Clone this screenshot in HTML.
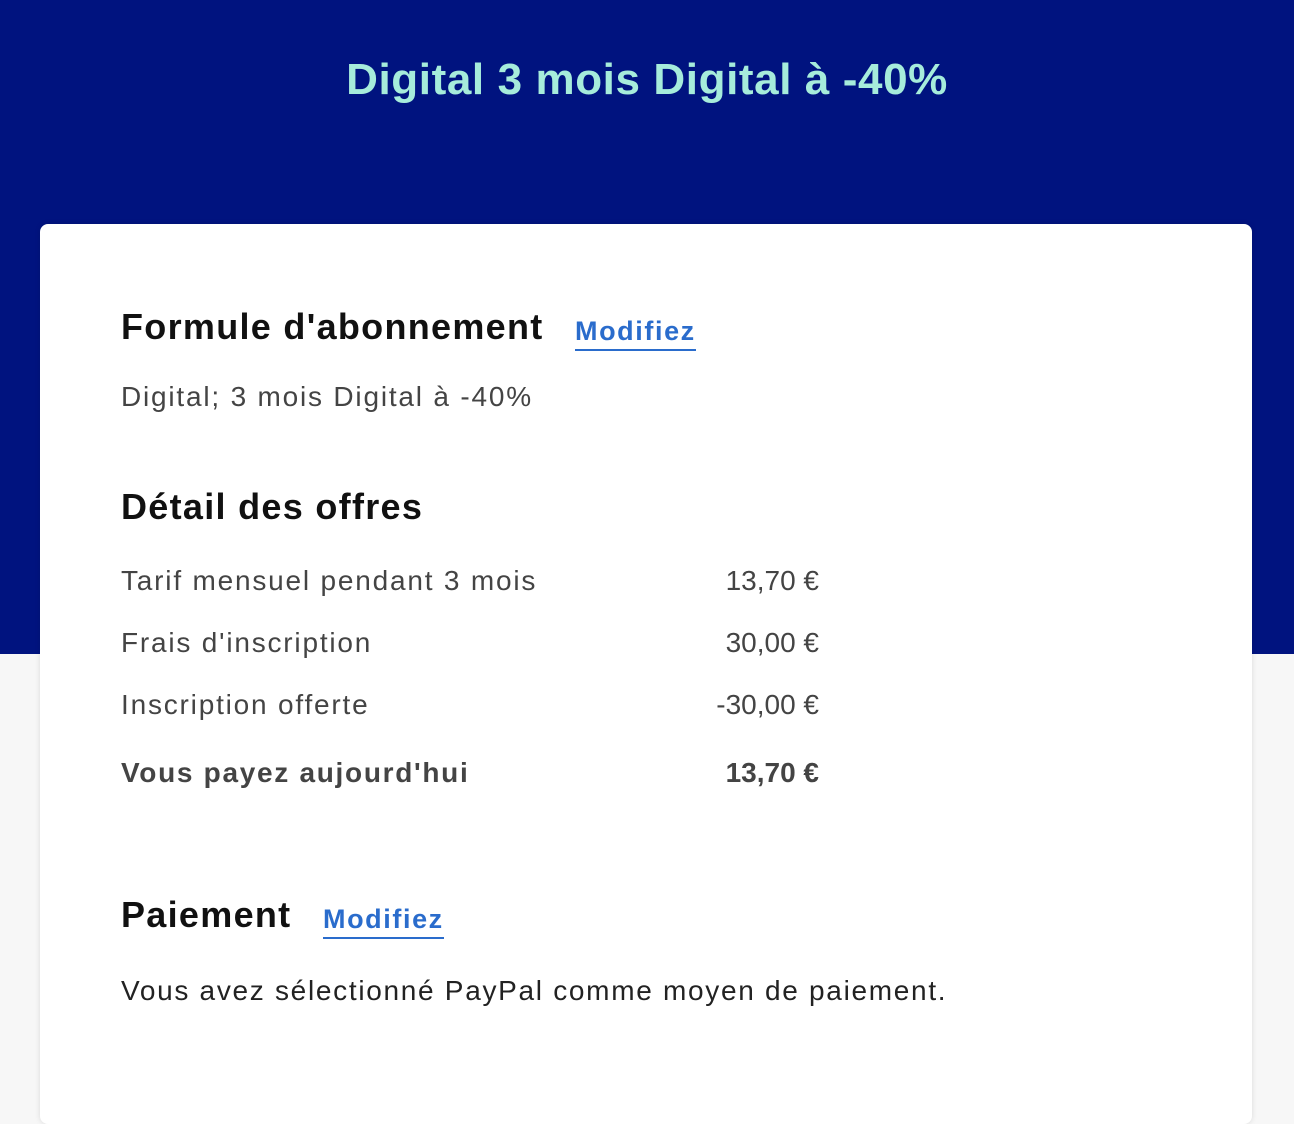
<!DOCTYPE html>
<html><head><meta charset="utf-8"><style>
body{margin:0;width:1294px;height:1064px;overflow:hidden;background:#f7f7f7;font-family:"Liberation Sans",sans-serif;position:relative}
.top{position:absolute;left:0;top:0;width:1294px;height:654px;background:#00137f}
.title{position:absolute;left:0;width:1294px;top:52px;text-align:center;color:#a6ecdb;font-weight:bold;font-size:44px;letter-spacing:0.6px;line-height:56px}
.card{position:absolute;left:40px;top:224px;width:1212px;height:900px;background:#fff;border-radius:8px;box-shadow:0 0 6px rgba(0,0,0,.12)}
.t{position:absolute;white-space:nowrap;line-height:40px}
.h{font-weight:bold;font-size:36px;color:#111;letter-spacing:1.3px}
.b{font-size:28px;color:#444;letter-spacing:1.8px}
.l{font-weight:bold;font-size:27px;color:#2a6ccc;letter-spacing:1.6px;border-bottom:2px solid #2a6ccc;line-height:36px}
.r{text-align:right;width:300px}
</style></head><body>
<div class="top"></div>
<div class="title">Digital 3 mois Digital à -40%</div>
<div class="card"></div>
<div class="t h" style="left:121px;top:307px">Formule d'abonnement</div>
<div class="t l" style="left:575px;top:313px">Modifiez</div>
<div class="t b" style="left:121px;top:377px">Digital; 3 mois Digital à -40%</div>
<div class="t h" style="left:121px;top:487px">Détail des offres</div>
<div class="t b" style="left:121px;top:561px">Tarif mensuel pendant 3 mois</div>
<div class="t b r" style="left:519px;top:561px;letter-spacing:0">13,70 €</div>
<div class="t b" style="left:121px;top:623px">Frais d'inscription</div>
<div class="t b r" style="left:519px;top:623px;letter-spacing:0">30,00 €</div>
<div class="t b" style="left:121px;top:685px">Inscription offerte</div>
<div class="t b r" style="left:519px;top:685px;letter-spacing:0">-30,00 €</div>
<div class="t b" style="left:121px;top:753px;font-weight:bold;color:#444;letter-spacing:1.7px">Vous payez aujourd'hui</div>
<div class="t b r" style="left:519px;top:753px;font-weight:bold;letter-spacing:0">13,70 €</div>
<div class="t h" style="left:121px;top:895px">Paiement</div>
<div class="t l" style="left:323px;top:901px">Modifiez</div>
<div class="t b" style="left:121px;top:971px;color:#222;letter-spacing:1.7px">Vous avez sélectionné PayPal comme moyen de paiement.</div>
</body></html>
